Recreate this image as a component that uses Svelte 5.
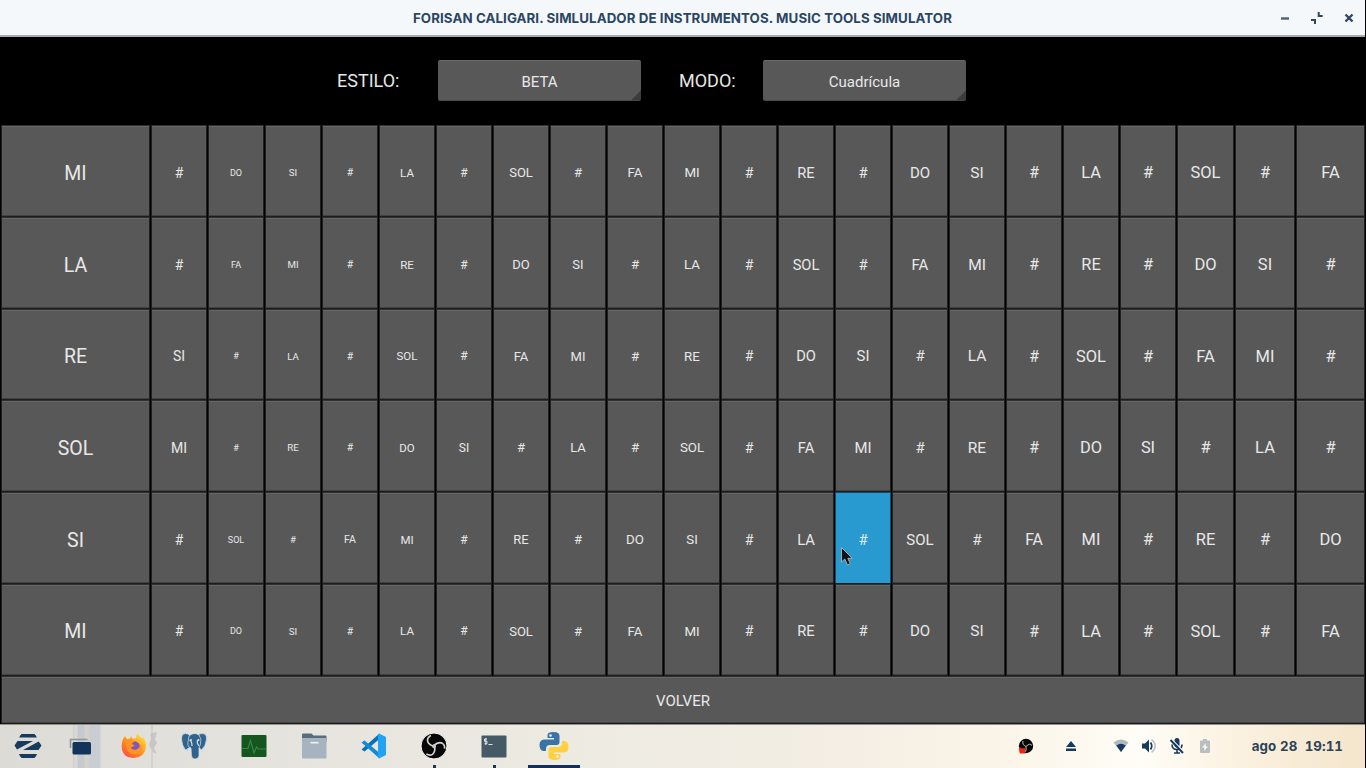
<script>
  const rows = [
    'MI # DO SI # LA # SOL # FA MI # RE # DO SI # LA # SOL # FA',
    'LA # FA MI # RE # DO SI # LA # SOL # FA MI # RE # DO SI #',
    'RE SI # LA # SOL # FA MI # RE # DO SI # LA # SOL # FA MI #',
    'SOL MI # RE # DO SI # LA # SOL # FA MI # RE # DO SI # LA #',
    'SI # SOL # FA MI # RE # DO SI # LA # SOL # FA MI # RE # DO',
    'MI # DO SI # LA # SOL # FA MI # RE # DO SI # LA # SOL # FA'
  ].map((r) => r.split(' '));
  const sizes = [19.5, 14, 9, 9.7, 10.5, 11.5, 12, 13, 13, 13.3, 13.3, 14.2, 14.7, 14.9, 15, 15.5, 15.8, 16.4, 16.4, 16.5, 16.5, 16.5];
  let pressed = $state('4-13');
</script>

<div class="screen">
  <header class="titlebar">
    <span class="title">FORISAN CALIGARI. SIMLULADOR DE INSTRUMENTOS. MUSIC TOOLS SIMULATOR</span>
    <div class="controls">
      <svg width="10" height="12" viewBox="0 0 10 12"><path d="M1 6.500h8" stroke="#4a607b" stroke-width="2.400" /></svg>
      <svg width="14" height="14" viewBox="0 0 14 14"><path d="M1 9h4v4M8.700 1v4h4" fill="none" stroke="#2f4763" stroke-width="2" /></svg>
      <svg width="10" height="12" viewBox="0 0 10 12"><path d="M1.500 2.500l7 7m0-7l-7 7" stroke="#2f4763" stroke-width="2.400" /></svg>
    </div>
  </header>

  <section class="options">
    <span class="label">ESTILO:</span>
    <button class="spinner">BETA</button>
    <span class="label second">MODO:</span>
    <button class="spinner">Cuadrícula</button>
  </section>

  <main class="grid">
    {#each rows as row, r}
      {#each row as note, c}
        <button
          class="key"
          class:open={c === 0}
          class:last={r === 5}
          class:pressed={pressed === `${r}-${c}`}
          style="font-size:{sizes[c]}px"
          onclick={() => (pressed = `${r}-${c}`)}>{note}</button>
      {/each}
    {/each}
  </main>
  <button class="key open back">VOLVER</button>

  <footer class="taskbar">
    <div class="apps">
      <div class="app first">
        <svg width="28" height="26" viewBox="0 0 28 26"><g fill="#173a5e"><path d="M7.500 1h13q1.800 1.500 2.300 3.500H5.200q.5-2 2.300-3.500zM5 21h18q-.7 2.400-2.500 4h-13Q5.700 23.400 5 21zM3.500 8H19L3 16.500.5 12.500zM24.700 8.500l2.800 4-3 4.500H9z" /></g></svg>
      </div>
      <div class="app files">
        <svg width="24" height="20" viewBox="0 0 24 20"><path d="M2.500 12V3.500h17" fill="none" stroke="#8b939b" stroke-width="1.600" /><rect x="4.500" y="6" width="18.500" height="12.500" rx="1.500" fill="#12335a" /></svg>
      </div>
      <div class="app">
        <svg width="26" height="26" viewBox="0 0 26 26"><defs><linearGradient id="fx" x1="0" y1="1" x2=".8" y2="0"><stop offset="0" stop-color="#ff3c50" /><stop offset=".45" stop-color="#ff8620" /><stop offset="1" stop-color="#ffdf37" /></linearGradient></defs><path d="M4 3l2 3 3-.5L10 3l2 3 3-1 1-4.500q3 3 4.500 5L22 4q3.500 5 3 10-1 10-12 11Q1.500 25 .7 14 .5 7 4 3z" fill="url(#fx)" /><circle cx="13.500" cy="13.500" r="5.300" fill="#8355bd" /><path d="M4.500 7q5-2.500 9 1.500l-3 2.500 3 1q-1 2-4 2.500 2 3 6 2 4-1.500 3.500-6 4 6-1 9.500-7 3.500-11-2Q4 13 4.500 7z" fill="#ff9420" /></svg>
        <svg class="ghost" width="12" height="26" viewBox="0 0 12 26"><path d="M1 3l5-2 2 1-2 6 2 4-3 5 3 6-4-2-4-7 2-7z" fill="#c8c7c3" /></svg>
      </div>
      <div class="app">
        <svg width="28" height="28" viewBox="0 0 28 28"><g fill="#31648c" stroke="#d6e2e8" stroke-width=".7"><path d="M8 2Q1.500 0 1.500 7q.5 7 4 11 2 2 3-1l2-3V4z" /><path d="M19 2q8-2 7.500 5-.5 7-5 11l-3-3z" /><path d="M9 4q5-4.500 10-1 3 4 1.500 9l-1.500 4v8q-1 3-4 3t-3.500-3l-.5-8q-4-1-3-6z" /><path d="M21 19l4-1-3 3h-3M9 16l-4 3 5 .5M9.500 8q2.500 1 2.500 6M18 8q-2 2 1 6" fill="none" stroke-width="1.200" /></g><circle cx="11" cy="8" r="1" fill="#d6e2e8" /><circle cx="18.500" cy="8" r="1" fill="#d6e2e8" /></svg>
      </div>
      <div class="app">
        <svg width="26" height="22" viewBox="0 0 26 22"><rect x=".5" y="0" width="25" height="22" rx="1" fill="#165520" /><path d="M1 13.500h6l2.500-8L13 18l2.500-6 1.500 2h8" fill="none" stroke="#35883f" stroke-width="1.200" /></svg>
      </div>
      <div class="app">
        <svg width="26" height="26" viewBox="0 0 26 26"><path d="M1 1.500Q1 .5 2 .5h8.500l2 2h12q1 0 1 1V9H1z" fill="#586e7b" /><rect x="1" y="5" width="24.500" height="20.500" rx="1" fill="#a7b3bf" /><path d="M9.500 9.700h8" stroke="#edf0f2" stroke-width="1.600" /></svg>
      </div>
      <div class="app">
        <svg width="26" height="26" viewBox="0 0 26 26"><path d="M18.500 6L3.500 18.500 .5 16.500 18.500.5z" fill="#0872b8" /><path d="M18.500 20L3.500 7.500.5 9.500l18 16z" fill="#138bd2" /><path d="M18 .5l7 3.500v18l-7 3.500-1-1V1.500z" fill="#24a2f2" /></svg>
      </div>
      <div class="app run">
        <svg width="28" height="28" viewBox="0 0 28 28"><circle cx="14" cy="14" r="13" fill="#070707" stroke="#f8f8f6" stroke-width="1" /><g fill="none" stroke="#d5d5d2" stroke-width="1.700"><path d="M14 14.500Q8 12.500 7.500 8.500 7.500 5 11 3.500" /><path d="M14 14.500Q8 12.500 7.500 8.500 7.500 5 11 3.500" transform="rotate(120 14 14)" /><path d="M14 14.500Q8 12.500 7.500 8.500 7.500 5 11 3.500" transform="rotate(240 14 14)" /></g><circle cx="14" cy="14.300" r="2" fill="#c8c8c4" /></svg>
      </div>
      <div class="app run">
        <svg width="26" height="23" viewBox="0 0 26 23"><rect x=".5" y=".5" width="25" height="22" rx="1" fill="#455a64" /><path d="M6 4H3.500v2.300H6v2.400H3.500M4.800 3v7M7.500 9.500h4" fill="none" stroke="#dfe5e7" stroke-width="1" /></svg>
      </div>
      <div class="app active">
        <svg width="30" height="30" viewBox="0 0 30 30"><path d="M14.500 1q6 0 6 4v6q0 3-3 3H11q-4 0-4 4v2H4q-3.500-1-3.500-6T5 8.500h10V7H8.500V4q0-3 6-3z" fill="#3874a5" /><path d="M15.500 29q-6 0-6-4v-6q0-3 3-3H19q4 0 4-4v-2h3q3.500 1 3.500 6T25 21.500H15V23h6.500v3q0 3-6 3z" fill="#ffd03f" /><circle cx="11.500" cy="4.500" r="1.200" fill="#fff" /><circle cx="18.500" cy="25.500" r="1.200" fill="#fff" /></svg>
      </div>
    </div>

    <div class="tray">
      <svg width="16" height="16" viewBox="0 0 16 16"><circle cx="8" cy="8" r="7.200" fill="#080808" /><path d="M8 8.500Q4 7 5 3M8 8.500q4-4 6-1M8 8.500q1 4-1.500 6" fill="none" stroke="#bbb" stroke-width="1" /><path d="M1 9l3 1.500 3-.5v5.500H2Q1 14 1 9z" fill="#f8200f" /></svg>
      <svg width="12" height="12" viewBox="0 0 12 12"><path d="M6 1l5 6H1zM1 8.500h10V11H1z" fill="#173a5e" /></svg>
      <svg width="16" height="14" viewBox="0 0 16 14"><path d="M.5 3.500Q8-2.500 15.500 3.500L8 13z" fill="#aeb9bf" /><path d="M3.300 6.500Q8 3 12.700 6.500L8 13z" fill="#173a5e" /></svg>
      <svg width="16" height="16" viewBox="0 0 16 16"><path d="M1 5.500h3L8 1.500v13L4 10.500H1z" fill="#173a5e" /><path d="M9.500 4.500q2.500 3.500 0 7" fill="none" stroke="#173a5e" stroke-width="1.700" /><path d="M10.500 1.500q7.500 6.500 0 13" fill="none" stroke="#b8c2c8" stroke-width="1.500" /></svg>
      <svg width="16" height="18" viewBox="0 0 16 18"><rect x="5.500" y="1" width="5" height="9.500" rx="2.500" fill="#173a5e" /><path d="M3 7.500q0 5 5 5t5-5M8 12v4M5 16h6" fill="none" stroke="#173a5e" stroke-width="1.600" /><path d="M2.500 2L15 15" stroke="#faf5e9" stroke-width="1.200" /><path d="M1.500 3L14 16" stroke="#173a5e" stroke-width="1.900" /></svg>
      <svg width="12" height="16" viewBox="0 0 12 16"><path d="M4 1h4v1.500h2q1 0 1 1V14q0 1-1 1H2q-1 0-1-1V3.500q0-1 1-1h2z" fill="#b9bec0" /><path d="M7 5L3 9.500h2.500L5 13l4-4.500H6.500z" fill="#fff8ed" /></svg>
      <span class="clock">ago 28&nbsp; 19:11</span>
    </div>
  </footer>

  <svg class="cursor" width="14" height="22" viewBox="0 0 14 22"><path d="M1.500 1.500v14.500l3.300-3 2.700 6 2.800-1.300-2.500-5.400h4.400z" fill="#101214" stroke="#a4adb3" stroke-width="1" /></svg>
</div>

<style>
  :global(body) { margin: 0; overflow: hidden; background: #000; }
  .screen { position: relative; width: 1366px; height: 768px; display: flex; flex-direction: column; background: #000; font-family: Roboto, sans-serif; }
  .titlebar { box-sizing: border-box; height: 37px; width: 1365px; background: #f5f8fa; border-bottom: 2px solid #a9aaab; display: grid; grid-template-columns: 1fr; align-items: center; justify-items: center; }
  .title { grid-area: 1 / 1; font: 700 13.3px Inter, sans-serif; letter-spacing: .085px; color: #2b4663; white-space: nowrap; padding-top: 1px; }
  .controls { grid-area: 1 / 1; justify-self: end; display: flex; align-items: center; gap: 20px; padding-right: 11px; }
  .options { height: 88px; display: flex; align-items: center; box-sizing: border-box; padding-left: 337px; color: #e6e6e6; }
  .label { font-size: 18px; width: 101px; padding-bottom: 1px; }
  .label.second { margin-left: 38px; width: 84px; }
  button { border: 0; padding: 0; margin: 0; font-family: inherit; color: #e8e8e8; }
  .spinner { width: 203px; height: 41px; margin-bottom: 2px; font-size: 15px; border-radius: 2px; background: linear-gradient(135deg, transparent calc(100% - 8px), #3c3c3c calc(100% - 7px)), #585858; box-shadow: inset 0 1px #696969, inset 0 -1px #484848; padding-top: 3px; }
  .grid { display: grid; grid-template-columns: 151px repeat(18, 57px) 58px 61px 70px; grid-template-rows: 92px 92px 91px 92px 92px 92px; }
  .key { box-sizing: border-box; background: #585858; border: 1px solid #202020; border-top-color: #303030; border-bottom-color: #1c1c1c; border-radius: 1px; box-shadow: inset 0 1px #666, inset 0 -1px #424242; margin-right: 1px; padding-top: 3px; }
  .open { margin-left: 1px; }
  .grid .open { padding-top: 4px; }
  .grid .last { padding-top: 2px; }
  .pressed { background: #289ad0; border-color: #124d6b; border-bottom-color: #1c1c1c; box-shadow: none; }
  .back { height: 48px; font-size: 15px; padding-top: 1px; }
  .taskbar { flex: 1; position: relative; width: 1365px; display: flex; justify-content: space-between; box-sizing: border-box; border-top: 1px solid #908f8d; background: linear-gradient(90deg, transparent 73px, #cfd0d0 73px 74px, #dad9d5 75px 77px, #c6cacf 78px 84px, #d5d2cc 85px 88px, #c9cdd2 90px 99px, #deddd8 102px, transparent 103px 151px, #c4c3c1 152px, transparent 153px), linear-gradient(90deg, #dddbd5 0, #e6e4de 300px, #eeebe2 600px, #f4eee4 850px, #fbf5e9 1010px, #fffdf7 1140px, #fbf1df 1240px, #f4e5cc 1365px); }
  .apps { display: flex; padding-left: 2px; }
  .app { box-sizing: border-box; width: 52px; margin-right: 8px; height: 43px; padding-bottom: 1px; display: flex; align-items: center; justify-content: center; position: relative; }
  .first { margin-right: 0; }
  .files { margin-right: 2px; }
  .ghost { position: absolute; left: 41px; top: 6px; }
  .run::after { content: ''; position: absolute; left: 25px; bottom: 0; width: 3px; height: 3px; background: #1b3655; }
  .active::after { content: ''; position: absolute; left: 0; bottom: 0; width: 52px; height: 3px; background: #14305a; }
  .tray { display: flex; align-items: center; height: 41px; padding-right: 22px; }
  .tray svg:nth-child(1) { margin-right: 31px; }
  .tray svg:nth-child(2) { margin-right: 36px; }
  .tray svg:nth-child(3) { margin-right: 12px; }
  .tray svg:nth-child(4) { margin-right: 12px; }
  .tray svg:nth-child(5) { margin-right: 14px; }
  .tray svg:nth-child(6) { margin-right: 41px; }
  .clock { font: 700 13.300px Inter, sans-serif; letter-spacing: .08px; font-variant-numeric: tabular-nums; color: #2b4258; white-space: nowrap; }
  .cursor { position: absolute; left: 840px; top: 546px; }
</style>
